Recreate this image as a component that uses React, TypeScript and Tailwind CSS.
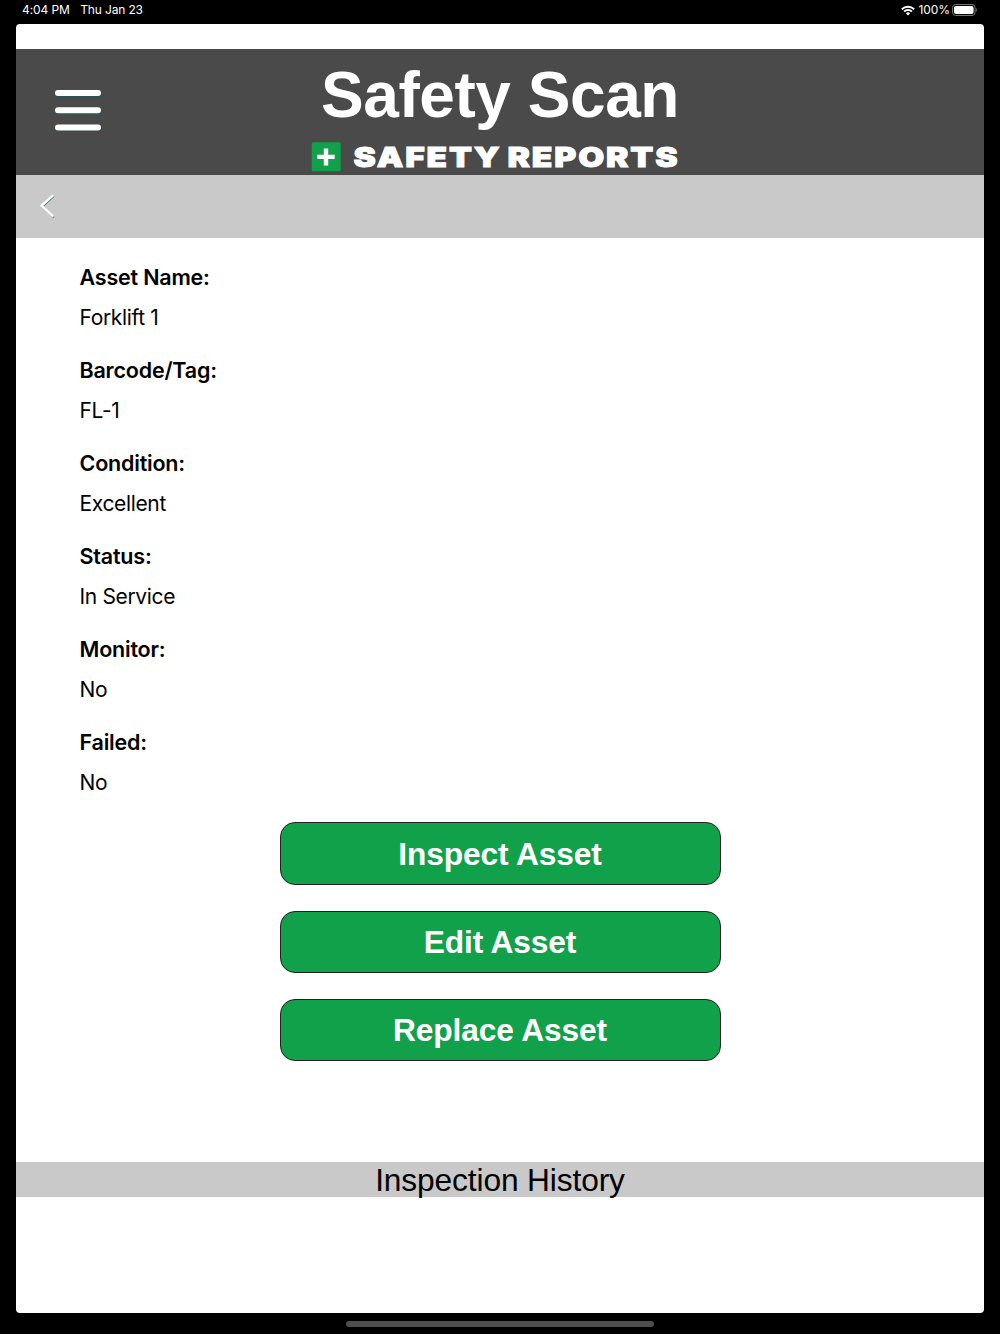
import React from 'react';

const fields = [
  { label: 'Asset Name:', value: 'Forklift 1' },
  { label: 'Barcode/Tag:', value: 'FL-1' },
  { label: 'Condition:', value: 'Excellent' },
  { label: 'Status:', value: 'In Service' },
  { label: 'Monitor:', value: 'No' },
  { label: 'Failed:', value: 'No' },
];

const actions = ['Inspect Asset', 'Edit Asset', 'Replace Asset'];

const StatusBar = () => (
  <div className="flex h-6 items-start justify-between pl-[22px] pr-[22px] font-['Inter',sans-serif] text-[12px] leading-[20px] text-white">
    <div className="flex gap-[10.5px]">
      <span className="tracking-[-0.1px]">4:04 PM</span>
      <span className="tracking-[-0.15px]">Thu Jan 23</span>
    </div>
    <div className="flex h-5 items-center">
      {/* Wifi */}
      <svg width="14" height="11" viewBox="0 0 14 11" fill="none" stroke="white" strokeWidth="1.9">
        <path d="M0.9 4.2a8.7 8.7 0 0 1 12.2 0" />
        <path d="M3.1 6.6a5.5 5.5 0 0 1 7.8 0" />
        <path d="M7 10.6 4.9 8.4a3 3 0 0 1 4.2 0z" fill="white" stroke="none" />
      </svg>
      <span className="ml-1 tracking-[-0.1px]">100%</span>
      {/* Battery */}
      <svg className="ml-[2px]" width="26" height="12" viewBox="0 0 26 12">
        <rect x="0.5" y="0.5" width="22.6" height="11" rx="3.2" fill="none" stroke="#777777" />
        <rect x="2" y="2" width="19.6" height="8" rx="2" fill="white" />
        <path d="M24.3 4v4c1.2-.5 1.2-3.5 0-4z" fill="#777777" />
      </svg>
    </div>
  </div>
);

const MenuIcon = () => (
  <svg width="50" height="46" viewBox="0 0 50 46">
    {[2, 19.2, 36.4].map((y) => (
      <g key={y}>
        <rect x="2.6" y={y + 1.5} width="46.5" height="6" rx="3" fill="#2a5353" />
        <rect x="2" y={y} width="46" height="6" rx="3" fill="white" />
      </g>
    ))}
  </svg>
);

const Logo = () => (
  <svg width="370" height="36" viewBox="0 0 370 36">
    <rect x="1.7" y="3.2" width="29" height="29" rx="1.5" fill="#12a14b" />
    <path d="M16 9.4v17M7.3 17.9h17.4" stroke="white" strokeWidth="4.4" />
    <g
      className="font-['Inter',sans-serif] text-[27px] font-black tracking-[1.5px]"
      fill="white"
      stroke="white"
      strokeWidth="0.9"
    >
      <text x="43.5" y="27.6" textLength="148" lengthAdjust="spacingAndGlyphs">SAFETY</text>
      <text x="197.5" y="27.6" textLength="172" lengthAdjust="spacingAndGlyphs">REPORTS</text>
    </g>
  </svg>
);

const Header = () => (
  <header className="grid h-[126px] grid-cols-[148px_1fr_148px] bg-[#4a4a4a]">
    <div className="pl-[37px] pt-[39px]">
      <MenuIcon />
    </div>
    <div className="flex flex-col items-center">
      <h1 className="mt-[14px] text-[64px] font-bold leading-[64px] tracking-[-0.45px] text-white">
        Safety Scan
      </h1>
      <div className="mt-3 mr-[10px]">
        <Logo />
      </div>
    </div>
  </header>
);

const App = () => {
  return (
    <div className="flex h-[1334px] w-[1000px] flex-col bg-black font-['Liberation_Sans',sans-serif] text-black">
      <StatusBar />

      <main className="mx-4 flex h-[1289px] flex-col overflow-hidden rounded-[4px] bg-white pt-[25px]">
        <Header />

        <nav className="h-[62.5px] shrink-0 bg-[#c9c9c9] pl-[22px] pt-[18px]">
          <svg width="20" height="26" viewBox="0 0 20 26" fill="none" strokeLinecap="round" strokeLinejoin="round">
            <path d="M15.3 3.6 4.3 13.5l11 10.2" stroke="#3f8080" strokeWidth="2" />
            <path d="M14.6 2.8 3.6 12.7l11 10.2" stroke="white" strokeWidth="2.4" />
          </svg>
        </nav>

        {/* Asset details */}
        <dl className="pl-[63.5px] pt-[23px] font-['Inter',sans-serif] text-[21.5px] leading-8">
          {fields.map((field) => (
            <div key={field.label} className="h-[93.2px]">
              <dt className="font-semibold tracking-[-0.2px]">{field.label}</dt>
              <dd className="pt-[9px] text-[21px] tracking-[-0.35px]">{field.value}</dd>
            </div>
          ))}
        </dl>

        {/* Actions */}
        <div className="mt-[2.8px] flex flex-col items-center gap-[25.5px]">
          {actions.map((action) => (
            <button
              key={action}
              className="h-[62.6px] w-[441px] shrink-0 rounded-[15px] border border-[#222222] bg-[#12a14b] text-[31.7px] font-bold leading-[60px] tracking-[-0.12px] text-white"
            >
              {action}
            </button>
          ))}
        </div>

        <h2 className="mt-[101px] h-[35px] shrink-0 bg-[#c9c9c9] text-center text-[31.7px] leading-[36px] tracking-[-0.12px]">
          Inspection History
        </h2>
      </main>

      {/* Home indicator */}
      <div className="mx-auto mt-2 h-[6px] w-[308px] rounded-full bg-[#4d4d4d]" />
    </div>
  );
};

export default App;
